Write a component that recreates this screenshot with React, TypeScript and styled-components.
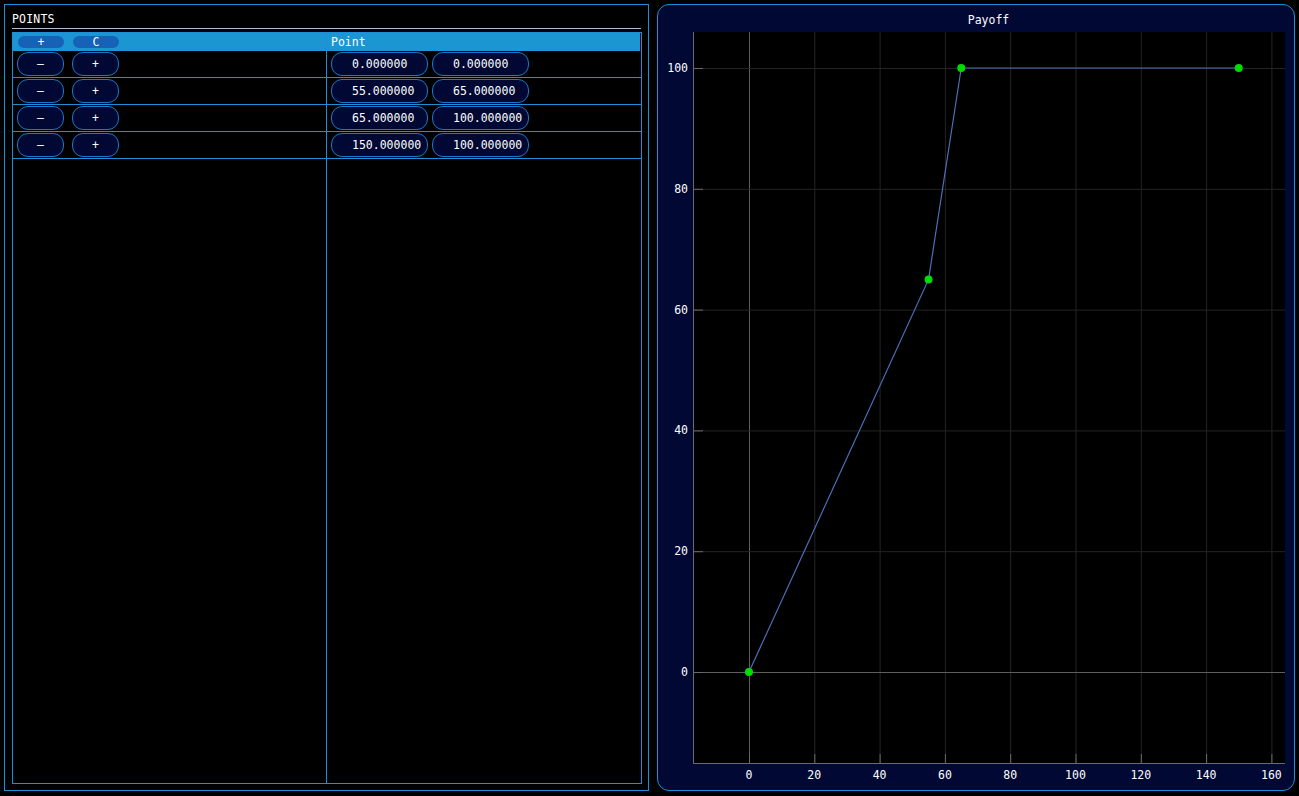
import React from 'react';
import styled, { createGlobalStyle } from 'styled-components';

const GlobalStyle = createGlobalStyle`
  html, body {
    margin: 0;
    padding: 0;
    background: #000;
  }
  body {
    font-family: "DejaVu Sans Mono", "Liberation Mono", monospace;
    font-size: 11.5px;
    color: #fff;
  }
`;

const Screen = styled.div`
  display: flex;
  gap: 8px;
  padding: 4px 0 0 4px;
  width: 1299px;
  height: 796px;
  box-sizing: border-box;
`;

const PointsPanel = styled.section`
  width: 645px;
  height: 787px;
  box-sizing: border-box;
  border: 1px solid #1c8fd6;
  padding: 0 6px 6px 7px;
  display: flex;
  flex-direction: column;
`;

const PanelTitle = styled.div`
  height: 23px;
  line-height: 28px;
  border-bottom: 1px solid #a9bdd2;
  margin-right: 1px;
  letter-spacing: 0.2px;
`;

const Table = styled.div`
  margin-top: 3px;
  flex: 1;
  display: grid;
  grid-template-columns: 314px 1fr;
  grid-template-rows: 18px repeat(4, 27px) 1fr;
  border: 1px solid #1c8fd6;
`;

const HeaderCell = styled.div<{ $first?: boolean }>`
  background: #1c96d2;
  display: flex;
  align-items: center;
  gap: 9px;
  padding-left: ${p => (p.$first ? '5px' : '4px')};
  border-right: ${p => (p.$first ? '1px solid #1c8fd6' : 'none')};
  margin-right: ${p => (p.$first ? '0' : '1px')};
`;

const Cell = styled.div<{ $first?: boolean; $last?: boolean }>`
  display: flex;
  align-items: center;
  gap: ${p => (p.$first ? '8px' : '4px')};
  padding-left: 4px;
  border-right: ${p => (p.$first ? '1px solid #1c8fd6' : 'none')};
  border-bottom: ${p => (p.$last ? 'none' : '1px solid #1c8fd6')};
`;

const SmallButton = styled.button`
  width: 46px;
  height: 12px;
  padding: 0;
  border: none;
  border-radius: 6px;
  background: #1562b6;
  color: #fff;
  font: inherit;
  line-height: 12px;
  text-align: center;
`;

const RowButton = styled.button`
  width: 47px;
  height: 24px;
  padding: 0;
  border: 1px solid #1a78c8;
  border-radius: 11px;
  background: #000833;
  color: #fff;
  font: inherit;
  text-align: center;
`;

const ValueField = styled.div`
  width: 97px;
  height: 24px;
  box-sizing: border-box;
  border: 1px solid #1a78c8;
  border-radius: 11px;
  background: #000833;
  padding-left: 20px;
  display: flex;
  align-items: center;
  white-space: pre;
`;

const PlotPanel = styled.section`
  width: 638px;
  height: 787px;
  box-sizing: border-box;
  border: 1px solid #1c8fd6;
  border-radius: 12px;
  background: #000833;
  display: flex;
  flex-direction: column;
  overflow: hidden;
`;

const PlotTitle = styled.div`
  height: 27px;
  padding-top: 3px;
  line-height: 24px;
  box-sizing: border-box;
  text-align: center;
  padding-left: 25px;
`;

const ChartSvg = styled.svg`
  display: block;
  font-family: "DejaVu Sans Mono", "Liberation Mono", monospace;
  font-size: 11.5px;
`;

const points: [number, number][] = [
  [0, 0],
  [55, 65],
  [65, 100],
  [150, 100],
];

const rows = [
  ['0.000000', '0.000000'],
  ['55.000000', '65.000000'],
  ['65.000000', '100.000000'],
  ['150.000000', '100.000000'],
];

// plot geometry (svg coordinates)
const PL = 35;
const PR = 627;
const PT = 0;
const PB = 731;
const sx = (v: number) => 91 + v * 3.265;
const sy = (v: number) => 640 - v * 6.04;

const Chart: React.FC = () => {
  const xTicks = [0, 20, 40, 60, 80, 100, 120, 140, 160];
  const yTicks = [0, 20, 40, 60, 80, 100];
  return (
    <ChartSvg width={636} height={757} viewBox="0 0 636 757">
      <rect x={PL} y={PT} width={PR - PL} height={PB - PT} fill="#000" />
      {xTicks.map(v => (
        <line key={'gx' + v} x1={sx(v) + 0.5} x2={sx(v) + 0.5} y1={PT} y2={PB} stroke={v === 0 ? '#5e5e5e' : '#242424'} />
      ))}
      {yTicks.map(v => (
        <line key={'gy' + v} x1={PL} x2={PR} y1={sy(v) + 0.5} y2={sy(v) + 0.5} stroke={v === 0 ? '#5e5e5e' : '#242424'} />
      ))}
      <line x1={PL + 0.5} x2={PL + 0.5} y1={PT} y2={PB} stroke="#6a6a6a" />
      <line x1={PL} x2={PR} y1={PB + 0.5} y2={PB + 0.5} stroke="#6a6a6a" />
      {yTicks.map(v => (
        <line key={'ty' + v} x1={PL} x2={PL + 10} y1={sy(v) + 0.5} y2={sy(v) + 0.5} stroke="#6a6a6a" />
      ))}
      {xTicks.map(v => (
        <line key={'tx' + v} x1={sx(v) + 0.5} x2={sx(v) + 0.5} y1={PB - 9} y2={PB} stroke="#6a6a6a" />
      ))}
      {yTicks.map(v => (
        <text key={'ly' + v} x={30} y={sy(v) + 4} fill="#fff" textAnchor="end">{v}</text>
      ))}
      {xTicks.map(v => (
        <text key={'lx' + v} x={sx(v)} y={747} fill="#fff" textAnchor="middle">{v}</text>
      ))}
      <polyline
        points={points.map(([x, y]) => `${sx(x)},${sy(y)}`).join(' ')}
        fill="none"
        stroke="#4a70b8"
        strokeWidth={1.2}
      />
      {points.map(([x, y], i) => (
        <circle key={i} cx={sx(x)} cy={sy(y)} r={4} fill="#00dc00" />
      ))}
    </ChartSvg>
  );
};

const App: React.FC = () => {
  return (
    <>
      <GlobalStyle />
      <Screen>
        <PointsPanel>
          <PanelTitle>POINTS</PanelTitle>
          <Table>
            <HeaderCell $first>
              <SmallButton>+</SmallButton>
              <SmallButton>C</SmallButton>
            </HeaderCell>
            <HeaderCell>Point</HeaderCell>
            {rows.map((r, i) => (
              <React.Fragment key={i}>
                <Cell $first>
                  <RowButton>–</RowButton>
                  <RowButton>+</RowButton>
                </Cell>
                <Cell>
                  <ValueField>{r[0]}</ValueField>
                  <ValueField>{r[1]}</ValueField>
                </Cell>
              </React.Fragment>
            ))}
            <Cell $first $last />
            <Cell $last />
          </Table>
        </PointsPanel>
        <PlotPanel>
          <PlotTitle>Payoff</PlotTitle>
          <Chart />
        </PlotPanel>
      </Screen>
    </>
  );
};

export default App;
